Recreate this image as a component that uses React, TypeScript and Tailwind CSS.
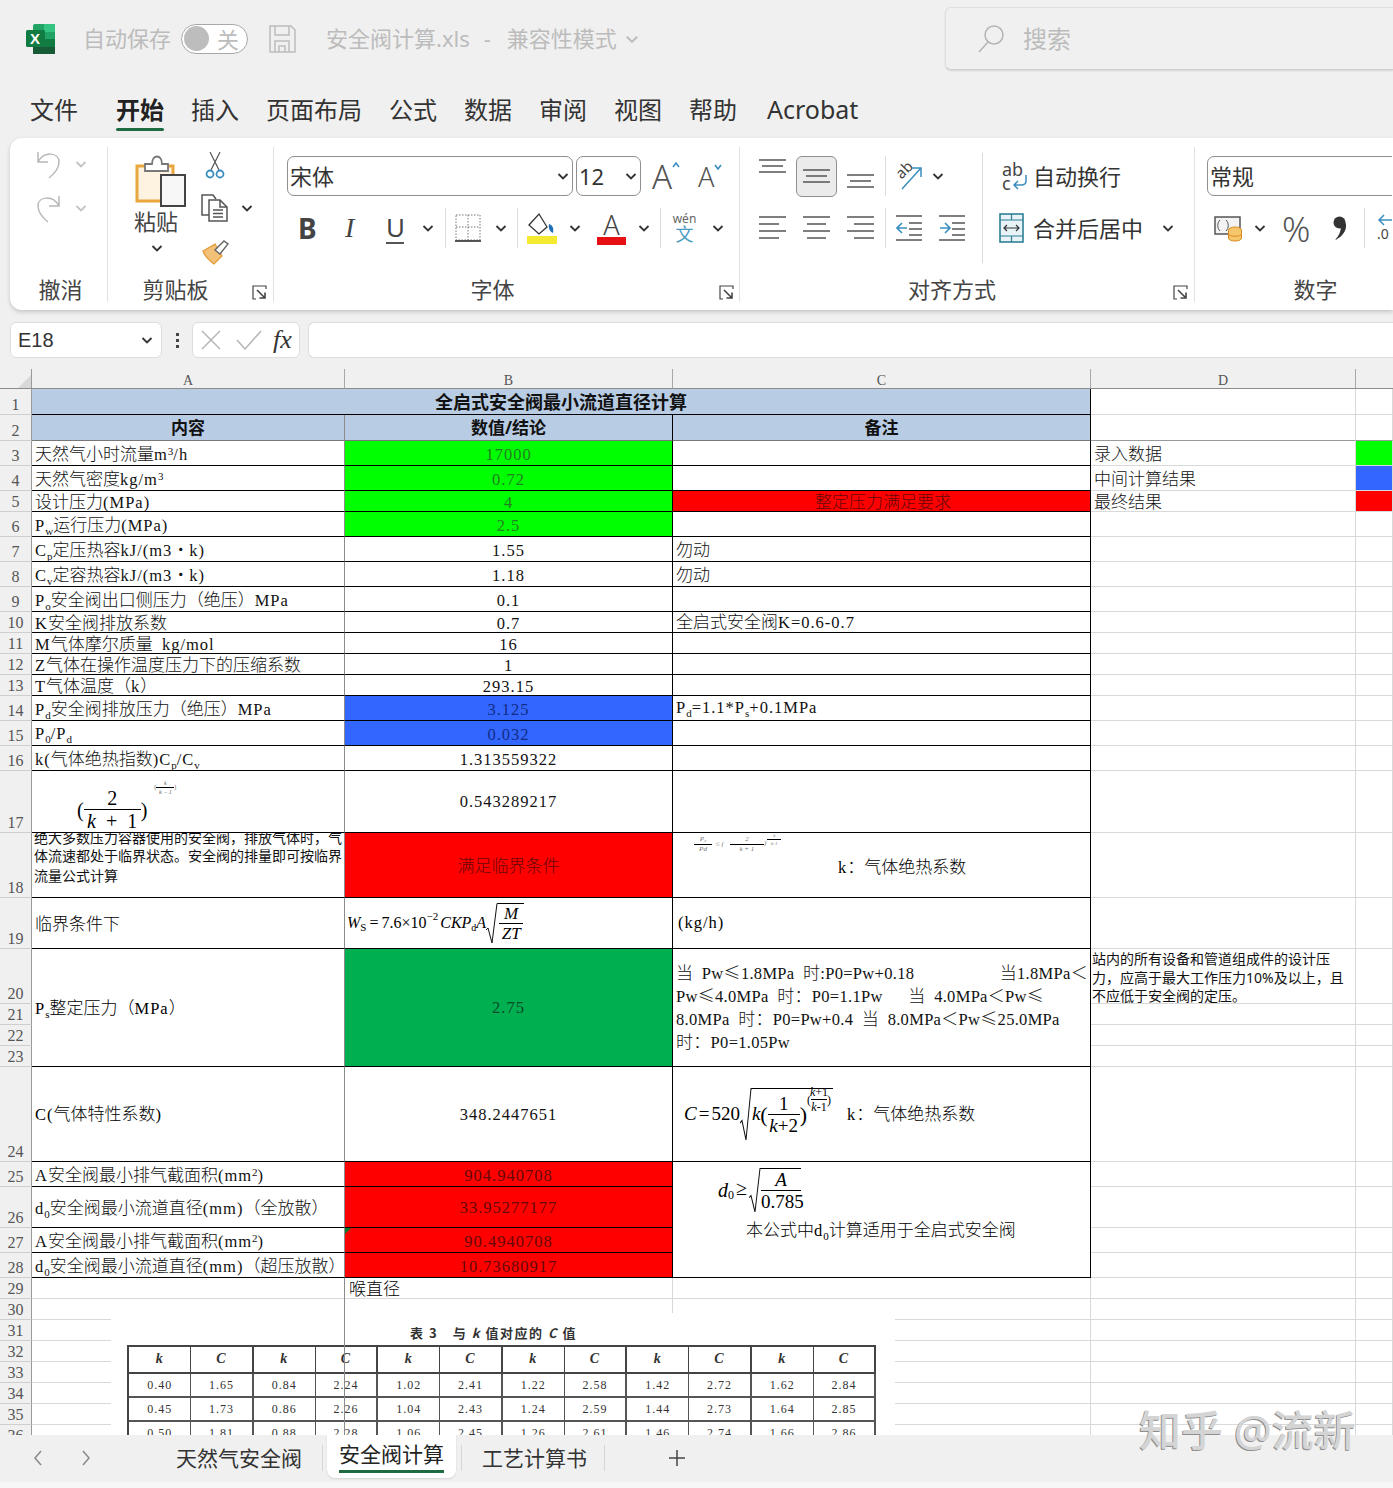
import React from 'react';

const line = 'border-b border-r border-black';
const light = 'border-b border-r border-[#d9d9d9]';
const labelCell = 'border-b border-r border-b-black border-r-[#8c8c8c]';
const serif = "font-['Liberation_Serif',serif]";

const fills: Record<string, string> = {
  green: 'bg-[#00ff00] text-[#228022]',
  blue: 'bg-[#3366ff] text-[#122c85]',
  red: 'bg-[#ff0000] text-[#660808]',
  dark: 'bg-[#00b050] text-[#0a4a28]',
  none: 'text-[#111]',
};

// ‹x› is a subscript, «x» a superscript, ascii runs get the narrow latin face
function Rich({ text }: { text: string }) {
  const parts = text.split(/(‹[^›]*›|«[^»]*»|[\x20-\x7e]+)/).filter(Boolean);
  return (
    <span className="whitespace-pre">
      {parts.map((p, i) => {
        if (p[0] === '‹') return <span key={i} className={`relative top-[4px] text-[11px] ${serif}`}>{p.slice(1, -1)}</span>;
        if (p[0] === '«') return <span key={i} className={`relative -top-[5px] text-[11px] ${serif}`}>{p.slice(1, -1)}</span>;
        if (p.charCodeAt(0) < 127) return <span key={i} className={`text-[16.5px] tracking-[1px] ${serif}`}>{p.replace(/ /g, '\u2002')}</span>;
        return <span key={i} className="font-['Noto_Sans_CJK_SC',sans-serif] text-[17px] font-light">{p}</span>;
      })}
    </span>
  );
}

function Frac({ top, bottom, className }: { top: React.ReactNode; bottom: React.ReactNode; className?: string }) {
  return (
    <span className={`inline-flex flex-col items-center ${className ?? ''}`}>
      <span className="leading-none">{top}</span>
      <span className="mt-[1px] self-stretch border-t border-black pt-[1px] text-center leading-none">{bottom}</span>
    </span>
  );
}

function Root({ children }: { children: React.ReactNode }) {
  return (
    <span className="inline-flex items-stretch">
      <svg className="w-[12px] shrink-0" viewBox="0 0 12 40" preserveAspectRatio="none" fill="none" stroke="#111" strokeWidth="1">
        <path d="M0 27L2 25L6 40L11 0.5H12" />
      </svg>
      <span className="flex items-center border-t border-black">{children}</span>
    </span>
  );
}

function Chev({ className = '', color = '#333' }: { className?: string; color?: string }) {
  return (
    <svg className={`h-[14px] w-[14px] shrink-0 ${className}`} viewBox="0 0 14 14" fill="none" stroke={color} strokeWidth="1.8">
      <path d="M2.5 5L7 9.5L11.5 5" />
    </svg>
  );
}

function Launcher({ className }: { className: string }) {
  return (
    <svg className={`absolute h-[15px] w-[15px] ${className}`} viewBox="0 0 15 15" fill="none" stroke="#444" strokeWidth="1.2">
      <path d="M14 4V1H1V14H4" />
      <path d="M5 5L13 13M13 7.5V13H7.5" strokeWidth="1.6" />
    </svg>
  );
}

function Lines({ rows, className = '' }: { rows: [number, number, number][]; className?: string }) {
  return (
    <svg className={`h-[28px] w-[27px] shrink-0 ${className}`} viewBox="0 0 27 28" stroke="#555" strokeWidth="1.5">
      {rows.map(([x, w, y], i) => (
        <line key={i} x1={x} x2={x + w} y1={y} y2={y} />
      ))}
    </svg>
  );
}

function Sep({ className = '' }: { className?: string }) {
  return <div className={`h-[40px] w-px shrink-0 bg-[#dcdcdc] ${className}`} />;
}

function Select({ text, className }: { text: string; className: string }) {
  return (
    <div className={`flex h-[40px] items-center justify-between rounded-[7px] border border-[#8f8f8f] bg-white pl-[2px] pr-[2px] text-[22px] text-[#333] ${className}`}>
      <span>{text}</span>
      <Chev />
    </div>
  );
}

function Group({ className, labelClass = '', label, children }: { className: string; labelClass?: string; label: string; children: React.ReactNode }) {
  return (
    <div className={`relative flex h-full shrink-0 flex-col ${className}`}>
      <div className="flex-1">{children}</div>
      <div className={`flex h-[35px] items-center justify-center pb-[6px] text-[22px] text-[#444] ${labelClass}`}>{label}</div>
    </div>
  );
}

function Divider() {
  return <div className="h-[155px] w-px shrink-0 self-center bg-[#e2e2e2]" />;
}

function TitleBar() {
  return (
    <div className="flex h-[77px] items-center pl-[26px] text-[#bcbcbc]">
      <svg className="h-[30px] w-[30px] shrink-0" viewBox="0 0 30 30">
        <rect x="7" y="0" width="22" height="30" rx="2" fill="#21a366" />
        <rect x="18" y="0" width="11" height="8" fill="#33c481" />
        <rect x="18" y="15" width="11" height="8" fill="#107c41" />
        <rect x="7" y="23" width="22" height="7" fill="#185c37" />
        <rect x="0" y="6" width="19" height="17" rx="1.5" fill="#107c41" />
        <text x="4" y="20" fontSize="15" fontWeight="700" fill="#fff" fontFamily="Liberation Sans">X</text>
      </svg>
      <span className="ml-[27px] text-[22px]">自动保存</span>
      <div className="ml-[10px] flex h-[30px] w-[67px] items-center rounded-full border border-[#a8a8a8] bg-white pl-[2px]">
        <div className="h-[25px] w-[25px] rounded-full bg-[#bdbdbd]" />
        <span className="ml-[8px] text-[22px] leading-none">关</span>
      </div>
      <svg className="ml-[21px] h-[28px] w-[27px] shrink-0" viewBox="0 0 27 28" fill="none" stroke="#bcbcbc" strokeWidth="1.5">
        <path d="M1 1H22L26 5V27H1Z" />
        <path d="M6 1V10H20V1M6 27V16H20V27M10 27V21H16V27" />
      </svg>
      <span className="ml-[30px] text-[22px]">安全阀计算.xls</span>
      <span className="ml-[14px] text-[22px]">-</span>
      <span className="ml-[16px] text-[22px]">兼容性模式</span>
      <Chev className="ml-[7px] h-[16px] w-[16px]" color="#bcbcbc" />
      <div className="ml-auto flex h-[63px] w-[448px] shrink-0 items-center rounded-l-[6px] border-y border-l border-[#dedede] border-b-[#cfcfcf] pl-[32px] shadow-[0_1px_2px_rgba(0,0,0,0.12)]">
        <svg className="h-[28px] w-[27px]" viewBox="0 0 27 28" fill="none" stroke="#b5b5b5" strokeWidth="1.5">
          <circle cx="16" cy="10" r="9" />
          <path d="M10 17L1 27" />
        </svg>
        <span className="ml-[18px] text-[24px]">搜索</span>
      </div>
    </div>
  );
}

function MenuBar() {
  return (
    <div className="flex h-[61px] items-center gap-[27px] pl-[30px] pt-[5px] text-[24px] text-[#333]">
      <span className="mr-[11px]">文件</span>
      <span className="relative font-bold text-[#222]">
        开始
        <div className="absolute -bottom-[3px] left-0 h-[3px] w-full rounded-full bg-[#1e6b42]" />
      </span>
      <span>插入</span>
      <span>页面布局</span>
      <span>公式</span>
      <span>数据</span>
      <span>审阅</span>
      <span>视图</span>
      <span>帮助</span>
      <span className="ml-[3px] text-[25px]">Acrobat</span>
    </div>
  );
}

function UndoGroup() {
  return (
    <Group className="w-[97px]" labelClass="pl-[4px]" label="撤消">
      <div className="flex flex-col gap-[14px] pl-[26px] pt-[11px]">
        <div className="flex items-center">
          <svg className="h-[30px] w-[26px]" viewBox="0 0 26 30" fill="none" stroke="#b8b8b8" strokeWidth="1.5">
            <path d="M2 3V13H12M2 13C8 2 23 3 23 13C23 19 18 25 13 29" />
          </svg>
          <Chev className="ml-[12px]" color="#c4c4c4" />
        </div>
        <div className="flex items-center">
          <svg className="h-[30px] w-[26px]" viewBox="0 0 26 30" fill="none" stroke="#b8b8b8" strokeWidth="1.5">
            <path d="M23 3V13H13M23 13C17 2 2 3 2 13C2 19 7 25 12 29" />
          </svg>
          <Chev className="ml-[12px]" color="#c4c4c4" />
        </div>
      </div>
    </Group>
  );
}

function ClipboardGroup() {
  return (
    <Group className="w-[165px]" labelClass="pr-[30px]" label="剪贴板">
      <div className="flex pl-[26px] pt-[13px]">
        <div className="flex w-[52px] flex-col items-center">
          <svg className="h-[56px] w-[51px]" viewBox="0 0 51 56">
            <rect x="2" y="14" width="37" height="36" fill="#fdf3e0" />
            <path d="M10 15H2V50H26M31 15H38V24" fill="none" stroke="#eaa63f" strokeWidth="3" />
            <path d="M10 20V13H17C17 3 27 3 27 13H33V20Z" fill="#fff" stroke="#777" strokeWidth="1.8" />
            <rect x="26" y="24" width="24" height="31" fill="#f7f7f7" stroke="#444" strokeWidth="2" />
          </svg>
          <span className="-ml-[8px] -mt-[1px] text-[22px] leading-[30px] text-[#444]">粘贴</span>
          <Chev className="-ml-[6px] mt-[5px]" />
        </div>
        <div className="ml-[14px] flex flex-col items-start">
          <svg className="ml-[5px] h-[28px] w-[20px]" viewBox="0 0 20 28" fill="none">
            <path d="M6 19L15 1M14 19L5 1" stroke="#555" strokeWidth="1.2" />
            <circle cx="5" cy="23" r="3.5" stroke="#3a8fc0" strokeWidth="1.8" />
            <circle cx="15" cy="23" r="3.5" stroke="#3a8fc0" strokeWidth="1.8" />
          </svg>
          <div className="mt-[15px] flex items-center">
            <svg className="h-[28px] w-[28px]" viewBox="0 0 28 28" fill="none" stroke="#555" strokeWidth="1.5">
              <path d="M9 21H2V1H13L16 5" />
              <path d="M9 6H20L27 13V27H9Z" fill="#fff" />
              <path d="M20 6V13H27M13 16H23M13 19.5H23M13 23H23" />
            </svg>
            <Chev className="ml-[12px]" />
          </div>
          <svg className="ml-[2px] mt-[17px] h-[26px] w-[27px]" viewBox="0 0 27 26">
            <path d="M1 12L13 5L20 17L12 25C8 22 3 18 1 12Z" fill="#f3c078" stroke="#e39a35" strokeWidth="1.2" />
            <path d="M13 11L22 2L26 5L18 15Z" fill="#fff" stroke="#666" strokeWidth="1.4" />
          </svg>
        </div>
      </div>
      <Launcher className="left-[144px] top-[147px]" />
    </Group>
  );
}

function FontGroup() {
  return (
    <Group className="w-[465px]" labelClass="pr-[28px]" label="字体">
      <div className="flex flex-col gap-[12px] pl-[13px] pt-[18px]">
        <div className="flex items-center text-[#555]">
          <Select text="宋体" className="w-[286px]" />
          <Select text="12" className="ml-[3px] w-[65px]" />
          <div className="relative ml-[11px] w-[28px] text-[33px] font-light leading-none">
            A
            <svg className="absolute left-[20px] top-[2px] h-[6px] w-[8px]" viewBox="0 0 8 6" fill="none" stroke="#3a8fc0" strokeWidth="1.6">
              <path d="M1 5L4 1L7 5" />
            </svg>
          </div>
          <div className="relative ml-[18px] w-[24px] text-[27px] font-light leading-none">
            A
            <svg className="absolute left-[16px] top-[1px] h-[6px] w-[8px]" viewBox="0 0 8 6" fill="none" stroke="#3a8fc0" strokeWidth="1.6">
              <path d="M1 1L4 5L7 1" />
            </svg>
          </div>
        </div>
        <div className="flex h-[40px] items-center pl-[11px] text-[#444]">
          <span className="w-[18px] text-[28px] font-bold">B</span>
          <span className={`ml-[29px] w-[13px] text-[28px] italic ${serif}`}>I</span>
          <span className="ml-[28px] w-[18px] border-b-2 border-[#555] text-[26px] leading-[30px]">U</span>
          <Chev className="ml-[17px]" />
          <Sep className="ml-[10px]" />
          <svg className="ml-[9px] h-[28px] w-[26px] shrink-0" viewBox="0 0 26 28" fill="none" stroke="#777" strokeWidth="1" strokeDasharray="1.5 1.5">
            <path d="M1 1H25V26H1ZM1 13H25M13 1V26" />
            <path d="M0 27H26" stroke="#222" strokeWidth="1.5" strokeDasharray="none" />
          </svg>
          <Chev className="ml-[13px]" />
          <Sep className="ml-[9px]" />
          <svg className="ml-[9px] h-[32px] w-[30px] shrink-0" viewBox="0 0 30 32">
            <path d="M2 13L12 2L20 15L12 22Z" fill="#fff" stroke="#333" strokeWidth="1.3" />
            <path d="M22 12C25 13 27 15 26 21C23 20 21 16 22 12Z" fill="#1f6fb5" />
            <rect x="0" y="24" width="30" height="8" fill="#f5ea2f" />
          </svg>
          <Chev className="ml-[11px]" />
          <div className="ml-[15px] flex w-[29px] shrink-0 flex-col items-center">
            <span className="text-[27px] font-light leading-[25px] text-[#444]">A</span>
            <div className="h-[8px] w-full bg-[#e60f14]" />
          </div>
          <Chev className="ml-[11px]" />
          <Sep className="ml-[9px]" />
          <div className="ml-[10px] flex w-[27px] shrink-0 flex-col items-center">
            <span className="text-[12px] leading-[12px] text-[#666]">wén</span>
            <span className="text-[18px] leading-[19px] text-[#4a9cc0]">文</span>
          </div>
          <Chev className="ml-[13px]" />
        </div>
      </div>
      <Launcher className="left-[445px] top-[147px]" />
    </Group>
  );
}

const stackTop: [number, number, number][] = [[0, 27, 3], [3, 21, 9], [0, 27, 15]];
const stackMid: [number, number, number][] = [[0, 27, 8], [3, 21, 14], [0, 27, 20]];
const stackBottom: [number, number, number][] = [[0, 27, 13], [3, 21, 19], [0, 27, 25]];
const alignLeft: [number, number, number][] = [[0, 27, 3], [0, 20, 10], [0, 27, 17], [0, 20, 24]];
const alignCenter: [number, number, number][] = [[0, 27, 3], [4, 19, 10], [0, 27, 17], [4, 19, 24]];
const alignRight: [number, number, number][] = [[0, 27, 3], [7, 20, 10], [0, 27, 17], [7, 20, 24]];

function AlignGroup() {
  return (
    <Group className="w-[454px]" labelClass="pr-[30px]" label="对齐方式">
      <div className="absolute left-[242px] top-[15px] h-[110px] w-px bg-[#dcdcdc]" />
      <div className="flex flex-col gap-[12px] pl-[19px] pt-[18px]">
        <div className="flex h-[40px] items-center">
          <Lines rows={stackTop} className="-mt-[10px]" />
          <div className="ml-[10px] flex h-[41px] w-[41px] shrink-0 items-center justify-center rounded-[6px] border border-[#8f8f8f] bg-[#ebebeb]">
            <Lines rows={stackMid} />
          </div>
          <Lines rows={stackBottom} className="ml-[10px]" />
          <Sep className="ml-[11px]" />
          <div className="relative ml-[10px] h-[30px] w-[26px] shrink-0">
            <span className="absolute left-[-1px] top-[1px] origin-center -rotate-45 text-[15px] leading-none text-[#444]">ab</span>
            <svg className="absolute inset-0" viewBox="0 0 26 30" fill="none" stroke="#3a8fc0" strokeWidth="1.5">
              <path d="M6 28L25 7M16 7H25V16" />
            </svg>
          </div>
          <Chev className="ml-[9px]" />
          <div className="ml-[57px] flex w-[25px] shrink-0 flex-col text-[18px] leading-[14px] text-[#444]">
            <span>ab</span>
            <span className="relative">
              c
              <svg className="absolute left-[10px] top-[-2px] h-[16px] w-[16px]" viewBox="0 0 16 16" fill="none" stroke="#3a8fc0" strokeWidth="1.5">
                <path d="M14 1V7C14 10 12 11 9 11H2M6 7L2 11L6 15" />
              </svg>
            </span>
          </div>
          <span className="ml-[6px] whitespace-nowrap text-[22px] text-[#333]">自动换行</span>
        </div>
        <div className="flex h-[40px] items-center">
          <Lines rows={alignLeft} />
          <Lines rows={alignCenter} className="ml-[17px]" />
          <Lines rows={alignRight} className="ml-[17px]" />
          <Sep className="ml-[11px]" />
          <svg className="ml-[10px] h-[28px] w-[26px] shrink-0" viewBox="0 0 26 28" fill="none">
            <path d="M0 2H26M13 9H26M13 15H26M13 21H26M0 26H26" stroke="#555" strokeWidth="1.4" />
            <path d="M11 14H1M6 9L1 14L6 19" stroke="#3a8fc0" strokeWidth="1.6" />
          </svg>
          <svg className="ml-[17px] h-[28px] w-[26px] shrink-0" viewBox="0 0 26 28" fill="none">
            <path d="M0 2H26M13 9H26M13 15H26M13 21H26M0 26H26" stroke="#555" strokeWidth="1.4" />
            <path d="M1 14H11M6 9L11 14L6 19" stroke="#3a8fc0" strokeWidth="1.6" />
          </svg>
          <svg className="ml-[34px] h-[30px] w-[25px] shrink-0" viewBox="0 0 25 30" fill="none">
            <rect x="1" y="1" width="23" height="28" fill="#e8f3f7" stroke="#2f7f96" strokeWidth="1.6" />
            <path d="M1 7H24M1 23H24M12.5 1V7M12.5 23V29" stroke="#2f7f96" strokeWidth="1.2" />
            <path d="M5 15H20M8 12L5 15L8 18M17 12L20 15L17 18" stroke="#333" strokeWidth="1.2" />
          </svg>
          <span className="ml-[9px] whitespace-nowrap text-[22px] text-[#333]">合并后居中</span>
          <Chev className="ml-[18px]" />
        </div>
      </div>
      <Launcher className="left-[433px] top-[147px]" />
    </Group>
  );
}

function NumberGroup() {
  return (
    <Group className="w-[197px] overflow-hidden" labelClass="pl-[44px]" label="数字">
      <div className="flex flex-col gap-[12px] pl-[12px] pt-[18px]">
        <Select text="常规" className="w-[300px] shrink-0" />
        <div className="flex h-[40px] items-center pl-[7px] text-[#555]">
          <svg className="h-[28px] w-[29px] shrink-0" viewBox="0 0 29 28" fill="none">
            <rect x="1" y="3" width="25" height="17" fill="#f3f3f3" stroke="#555" strokeWidth="1.5" />
            <path d="M6 6C3 9 3 14 6 17M12 6C15 9 15 14 12 17" stroke="#555" />
            <ellipse cx="21" cy="16" rx="6.5" ry="3" fill="#f6c66c" stroke="#d98c1f" />
            <path d="M14.5 16V24C14.5 28 27.5 28 27.5 24V16" fill="#f6c66c" stroke="#d98c1f" />
            <path d="M14.5 20C14.5 23 27.5 23 27.5 20" stroke="#d98c1f" />
          </svg>
          <Chev className="ml-[10px]" />
          <span className="ml-[15px] w-[27px] shrink-0 text-[35px] font-light leading-none">%</span>
          <svg className="ml-[24px] h-[24px] w-[13px] shrink-0" viewBox="0 0 13 24">
            <circle cx="6.5" cy="6.5" r="6" fill="#333" />
            <path d="M8 10L13 7C14 15 9 21 2 24C6 20 8 15 8 10Z" fill="#333" />
          </svg>
          <Sep className="ml-[18px]" />
          <div className="ml-[12px] flex shrink-0 flex-col">
            <svg className="h-[12px] w-[16px]" viewBox="0 0 16 12" fill="none" stroke="#3a8fc0" strokeWidth="1.5">
              <path d="M16 6H2M7 1L2 6L7 11" />
            </svg>
            <span className="text-[14px] leading-[16px] text-[#444]">.0</span>
          </div>
        </div>
      </div>
    </Group>
  );
}

function FormulaBar() {
  return (
    <div className="mb-[11px] mt-[12px] flex h-[36px] pl-[10px]">
      <div className="flex w-[152px] shrink-0 items-center justify-between rounded-[6px] border border-[#dedede] bg-white pl-[7px] pr-[7px] font-['Liberation_Sans',sans-serif] text-[20px] text-[#333]">
        <span>E18</span>
        <Chev />
      </div>
      <div className="flex w-[30px] shrink-0 flex-col items-center justify-center gap-[3px]">
        <div className="h-[3px] w-[3px] bg-[#444]" />
        <div className="h-[3px] w-[3px] bg-[#444]" />
        <div className="h-[3px] w-[3px] bg-[#444]" />
      </div>
      <div className="flex w-[108px] shrink-0 items-center rounded-[6px] border border-[#dedede] bg-white pl-[8px]">
        <svg className="h-[20px] w-[20px] shrink-0" viewBox="0 0 20 20" fill="none" stroke="#b5b5b5" strokeWidth="1.5">
          <path d="M1 1L19 19M19 1L1 19" />
        </svg>
        <svg className="ml-[15px] h-[20px] w-[26px] shrink-0" viewBox="0 0 26 20" fill="none" stroke="#b5b5b5" strokeWidth="1.5">
          <path d="M1 10L9 19L25 1" />
        </svg>
        <span className={`ml-[11px] text-[26px] italic leading-none text-[#333] ${serif}`}>fx</span>
      </div>
      <div className="ml-[8px] flex-1 rounded-l-[6px] border-y border-l border-[#dedede] bg-white" />
    </div>
  );
}

type DataRow = { n: number; a: string; b: string; fill?: string; c?: string; cFill?: string; d?: string; e?: string };

const dataRows: DataRow[] = [
  { n: 3, a: '天然气小时流量m«3»/h', b: '17000', fill: 'green', d: '录入数据', e: 'bg-[#00ff00]' },
  { n: 4, a: '天然气密度kg/m«3»', b: '0.72', fill: 'green', d: '中间计算结果', e: 'bg-[#3366ff]' },
  { n: 5, a: '设计压力(MPa)', b: '4', fill: 'green', c: '整定压力满足要求', cFill: 'red', d: '最终结果', e: 'bg-[#ff0000]' },
  { n: 6, a: 'P‹w›运行压力(MPa)', b: '2.5', fill: 'green' },
  { n: 7, a: 'C‹p›定压热容kJ/(m3·k)', b: '1.55', c: '勿动' },
  { n: 8, a: 'C‹v›定容热容kJ/(m3·k)', b: '1.18', c: '勿动' },
  { n: 9, a: 'P‹o›安全阀出口侧压力（绝压）MPa', b: '0.1' },
  { n: 10, a: 'K安全阀排放系数', b: '0.7', c: '全启式安全阀K=0.6-0.7' },
  { n: 11, a: 'M气体摩尔质量 kg/mol', b: '16' },
  { n: 12, a: 'Z气体在操作温度压力下的压缩系数', b: '1' },
  { n: 13, a: 'T气体温度（k）', b: '293.15' },
  { n: 14, a: 'P‹d›安全阀排放压力（绝压）MPa', b: '3.125', fill: 'blue', c: 'P‹d›=1.1*P‹s›+0.1MPa' },
  { n: 15, a: 'P‹0›/P‹d›', b: '0.032', fill: 'blue' },
  { n: 16, a: 'k(气体绝热指数)C‹p›/C‹v›', b: '1.313559322' },
];

function RowNo({ n }: { n: number }) {
  return (
    <div className={`flex items-end justify-center border-b border-r border-b-[#cfcfcf] border-r-[#9a9a9a] bg-[#f0f0f0] text-[16px] leading-[19px] text-[#555] ${serif}`}>
      {n}
    </div>
  );
}

function ColHead({ t, last }: { t: string; last?: boolean }) {
  return (
    <div className={`flex items-end justify-center border-b border-b-[#8c8c8c] bg-[#f0f0f0] text-[14px] leading-[14px] text-[#555] ${serif} ${last ? '' : 'border-r border-r-[#a8a8a8]'}`}>
      {t}
    </div>
  );
}

function Label({ text }: { text: string }) {
  return (
    <div className={`flex items-center overflow-hidden pl-[3px] pt-[2px] leading-[18px] text-[#111] ${labelCell}`}>
      <Rich text={text} />
    </div>
  );
}

function Value({ text, fill = 'none', className = '' }: { text: string; fill?: string; className?: string }) {
  return (
    <div className={`flex items-center justify-center leading-[18px] ${line} ${fills[fill]} ${className}`}>
      <Rich text={text} />
    </div>
  );
}

function Blank({ className = light }: { className?: string }) {
  return <div className={className} />;
}

function Sheet() {
  return (
    <div className="grid h-[1066px] grid-cols-[32px_313px_328px_418px_265px_37px] grid-rows-[20px_26px_26px_25px_25px_21px_25px_25px_25px_25px_21px_21px_21px_21px_25px_25px_25px_62px_65px_51px_55px_21px_21px_21px_95px_25px_41px_25px_25px_21px_21px_21px_21px_21px_21px_21px_21px] overflow-hidden bg-white">
      <div className="flex border-b border-r border-b-[#8c8c8c] border-r-[#9a9a9a] bg-[#f0f0f0]">
        <div className="ml-auto mt-auto h-0 w-0 border-b-[13px] border-l-[13px] border-b-[#d8d8d8] border-l-transparent" />
      </div>
      <ColHead t="A" />
      <ColHead t="B" />
      <ColHead t="C" />
      <ColHead t="D" />
      <ColHead t="" last />

      <RowNo n={1} />
      <div className={`col-span-3 flex items-center justify-center bg-[#b8cce4] text-[18px] font-bold leading-[22px] text-[#111] ${line}`}>全启式安全阀最小流道直径计算</div>
      <Blank />
      <Blank />

      <RowNo n={2} />
      <div className="flex items-center justify-center border-b border-r border-b-[#777] border-r-[#8c8c8c] bg-[#b8cce4] text-[17px] font-bold leading-[22px] text-[#111]">内容</div>
      <div className="flex items-center justify-center border-b border-r border-b-[#777] border-r-black bg-[#b8cce4] text-[17px] font-bold leading-[22px] text-[#111]">数值/结论</div>
      <div className="flex items-center justify-center border-b border-r border-b-[#777] border-r-black bg-[#b8cce4] text-[17px] font-bold leading-[22px] text-[#111]">备注</div>
      <Blank className="border-b border-r border-b-[#999] border-r-[#d9d9d9]" />
      <Blank className="border-b border-r border-b-[#999] border-r-[#d9d9d9]" />

      {dataRows.map((r) => (
        <React.Fragment key={r.n}>
          <RowNo n={r.n} />
          <Label text={r.a} />
          <Value text={r.b} fill={r.fill} className="pt-[2px]" />
          <div className={`flex items-center overflow-hidden pl-[3px] leading-[18px] ${r.cFill ? 'justify-center' : ''} ${line} ${fills[r.cFill ?? 'none']}`}>
            {r.c ? <Rich text={r.c} /> : null}
          </div>
          <div className={`flex items-center pl-[3px] leading-[18px] text-[#111] ${light}`}>{r.d ? <Rich text={r.d} /> : null}</div>
          <Blank className={`${light} ${r.e ?? ''}`} />
        </React.Fragment>
      ))}

      {/* 17 */}
      <RowNo n={17} />
      <div className={`flex items-center pl-[45px] pt-[16px] ${labelCell} ${serif}`}>
        <span className="text-[20px]">(</span>
        <Frac className="w-[57px] text-[20px] italic" top={<span className="not-italic">2</span>} bottom={<span>k&nbsp;&nbsp;<span className="not-italic">+&nbsp;&nbsp;1</span></span>} />
        <span className="text-[20px]">)</span>
        <span className="relative -top-[22px] ml-[7px] flex items-center text-[6px] text-[#666]">
          (<Frac className="w-[18px] italic" top="k" bottom="k − 1" />)
        </span>
      </div>
      <Value text="0.543289217" />
      <Blank className={line} />
      <Blank />
      <Blank />

      {/* 18 */}
      <RowNo n={18} />
      <div className={`flex flex-col overflow-hidden pl-[2px] text-[14px] leading-[18px] text-[#111] ${labelCell}`}>
        <div className="-mt-[4px] whitespace-nowrap">绝大多数压力容器使用的安全阀，排放气体时，气</div>
        <div className="whitespace-nowrap">体流速都处于临界状态。安全阀的排量即可按临界</div>
        <div className="mt-[2px] whitespace-nowrap">流量公式计算</div>
      </div>
      <Value text="满足临界条件" fill="red" />
      <div className={`flex flex-col ${line}`}>
        <div className={`ml-[21px] mt-[1px] flex h-[20px] items-center text-[7px] italic text-[#777] ${serif}`}>
          <Frac className="w-[18px]" top="P₀" bottom="Pd" />
          <span className="ml-[4px] mr-[6px]">≤ (</span>
          <Frac className="w-[34px]" top="2" bottom="k + 1" />
          <span className="relative -top-[1px]">)</span>
          <Frac className="relative -top-[5px] ml-[1px] w-[14px] text-[5px]" top="k" bottom="k-1" />
        </div>
        <div className="ml-[165px] leading-[24px]">
          <Rich text="k：气体绝热系数" />
        </div>
      </div>
      <Blank />
      <Blank />

      {/* 19 */}
      <RowNo n={19} />
      <div className={`flex items-center pl-[3px] ${labelCell}`}>
        <Rich text="临界条件下" />
      </div>
      <div className={`flex items-center whitespace-nowrap pl-[2px] text-[16px] ${line} ${serif}`}>
        <i>W</i>
        <span className="relative top-[4px] text-[11px]">S</span>
        <span className="mx-[3px]">=</span>
        <span>7.6×10</span>
        <span className="relative -top-[7px] text-[11px]">−2</span>
        <i className="ml-[2px]">CKP</i>
        <span className="relative top-[4px] text-[10px]">d</span>
        <i>A</i>
        <Root>
          <Frac className="w-[26px] px-[1px] py-[1px] text-[17px] italic" top="M" bottom="ZT" />
        </Root>
      </div>
      <div className={`flex items-center pl-[5px] ${line}`}>
        <Rich text="(kg/h)" />
      </div>
      <Blank />
      <Blank />

      {/* 20-23, merged in A, B and C */}
      <RowNo n={20} />
      <div className={`row-span-4 flex items-center pl-[3px] ${labelCell}`}>
        <Rich text="P‹s›整定压力（MPa）" />
      </div>
      <Value text="2.75" fill="dark" className="row-span-4" />
      <div className={`row-span-4 flex flex-col justify-center pb-[1px] pl-[3px] leading-[21px] text-[#111] [&_span]:tracking-[0.3px] ${line}`}>
        <Rich text="当 Pw≤1.8MPa 时:P0=Pw+0.18          当1.8MPa＜" />
        <Rich text="Pw≤4.0MPa 时：P0=1.1Pw   当 4.0MPa＜Pw≤" />
        <Rich text="8.0MPa 时：P0=Pw+0.4 当 8.0MPa＜Pw≤25.0MPa" />
        <Rich text="时：P0=1.05Pw" />
      </div>
      <div className={`overflow-visible whitespace-nowrap pl-[1px] pt-[1px] text-[14px] leading-[18.5px] text-[#111] ${light}`}>
        <div>站内的所有设备和管道组成件的设计压</div>
        <div>力，应高于最大工作压力10%及以上，且</div>
        <div>不应低于安全阀的定压。</div>
      </div>
      <Blank />
      <RowNo n={21} />
      <Blank />
      <Blank />
      <RowNo n={22} />
      <Blank />
      <Blank />
      <RowNo n={23} />
      <Blank />
      <Blank />

      {/* 24 */}
      <RowNo n={24} />
      <div className={`flex items-center pl-[3px] ${labelCell}`}>
        <Rich text="C(气体特性系数)" />
      </div>
      <Value text="348.2447651" />
      <div className={`flex items-center pl-[11px] ${line}`}>
        <div className={`flex items-center whitespace-nowrap text-[19px] ${serif}`}>
          <i>C</i>
          <span className="mx-[2px]">=</span>
          <span>520</span>
          <Root>
            <span className="flex items-center py-[5px] pr-[2px]">
              <i>k</i>
              <span className="text-[22px] leading-none">(</span>
              <Frac className="w-[32px]" top="1" bottom={<span><i>k</i>+2</span>} />
              <span className="text-[22px] leading-none">)</span>
              <span className="relative -top-[15px] flex items-center text-[12px]">
                (<Frac className="w-[16px]" top={<span><i>k</i>+1</span>} bottom={<span><i>k</i>-1</span>} />)
              </span>
            </span>
          </Root>
        </div>
        <div className="ml-[14px]">
          <Rich text="k：气体绝热系数" />
        </div>
      </div>
      <Blank />
      <Blank />

      {/* 25 */}
      <RowNo n={25} />
      <Label text="A安全阀最小排气截面积(mm«2»)" />
      <Value text="904.940708" fill="red" className="pt-[2px]" />
      <div className={`row-span-4 flex flex-col ${line}`}>
        <div className={`ml-[45px] mt-[5px] flex h-[46px] items-center whitespace-nowrap text-[20px] ${serif}`}>
          <i>d</i>
          <span className="relative top-[5px] text-[12px]">0</span>
          <span className="relative -top-[2px] mx-[2px]">≥</span>
          <Root>
            <Frac className="w-[40px] py-[1px] text-[19px]" top={<i>A</i>} bottom="0.785" />
          </Root>
        </div>
        <div className="ml-[73px] mt-[3px]">
          <Rich text="本公式中d‹0›计算适用于全启式安全阀" />
        </div>
      </div>
      <Blank />
      <Blank />

      <RowNo n={26} />
      <Label text="d‹0›安全阀最小流道直径(mm)（全放散）" />
      <Value text="33.95277177" fill="red" />
      <Blank />
      <Blank />

      <RowNo n={27} />
      <Label text="A安全阀最小排气截面积(mm«2»)" />
      <Value text="90.4940708" fill="red" className="relative pt-[2px]" />
      <Blank />
      <Blank />

      <RowNo n={28} />
      <Label text="d‹0›安全阀最小流道直径(mm)（超压放散）" />
      <Value text="10.73680917" fill="red" className="pt-[2px]" />
      <Blank />
      <Blank />

      <RowNo n={29} />
      <Blank className="border-b border-r border-b-[#d9d9d9] border-r-[#8c8c8c]" />
      <div className={`flex items-center pl-[4px] leading-[18px] ${light}`}>
        <Rich text="喉直径" />
      </div>
      <Blank />
      <Blank />
      <Blank />

      {[30, 31, 32, 33, 34, 35, 36].map((n) => (
        <React.Fragment key={n}>
          <RowNo n={n} />
          <Blank className="border-b border-r border-b-[#d9d9d9] border-r-[#8c8c8c]" />
          <Blank />
          <Blank />
          <Blank />
          <Blank />
        </React.Fragment>
      ))}
    </div>
  );
}

const pasted = [
  ['0.40', '1.65', '0.84', '2.24', '1.02', '2.41', '1.22', '2.58', '1.42', '2.72', '1.62', '2.84'],
  ['0.45', '1.73', '0.86', '2.26', '1.04', '2.43', '1.24', '2.59', '1.44', '2.73', '1.64', '2.85'],
  ['0.50', '1.81', '0.88', '2.28', '1.06', '2.45', '1.26', '2.61', '1.46', '2.74', '1.66', '2.86'],
];

// the pasted picture of table 3, it floats over rows 30-36
function PastedTable() {
  return (
    <div className={`absolute left-[111px] top-[944px] h-[122px] w-[784px] overflow-hidden bg-white pl-[16px] pt-[12px] ${serif}`}>
      <div className="h-[20px] pr-[35px] text-center font-['Noto_Sans_CJK_SC',sans-serif] text-[13px] font-bold leading-[16px] tracking-[1.5px] text-[#333]">
        表 3　与 <i>k</i> 值对应的 <i>C</i> 值
      </div>
      <div className="grid w-[749px] grid-cols-12 border-l-2 border-t-2 border-[#444] text-center text-[12px] font-normal tracking-[1px] text-[#333]">
        {['k', 'C', 'k', 'C', 'k', 'C', 'k', 'C', 'k', 'C', 'k', 'C'].map((t, i) => (
          <div key={i} className={`h-[27px] border-b-2 border-[#444] text-[14px] font-bold italic leading-[24px] ${i % 2 ? 'border-r-2' : 'border-r'}`}>
            {t}
          </div>
        ))}
        {pasted.flat().map((t, i) => (
          <div key={i} className={`h-[24px] border-b-2 border-[#555] leading-[22px] ${i % 2 ? 'border-r-2' : 'border-r'}`}>
            {t}
          </div>
        ))}
      </div>
    </div>
  );
}

function SheetTabs() {
  return (
    <div className="flex h-[47px] items-start bg-[#f0f0f0] pl-[31px] text-[21px] text-[#333]">
      <svg className="mt-[14px] h-[18px] w-[14px] shrink-0" viewBox="0 0 14 18" fill="none" stroke="#888" strokeWidth="1.5">
        <path d="M10 2L4 9L10 16" />
      </svg>
      <svg className="ml-[34px] mt-[14px] h-[18px] w-[14px] shrink-0" viewBox="0 0 14 18" fill="none" stroke="#888" strokeWidth="1.5">
        <path d="M4 2L10 9L4 16" />
      </svg>
      <span className="ml-[83px] mt-[8px]">天然气安全阀</span>
      <div className="ml-[20px] mt-[10px] h-[26px] w-px bg-[#d6d6d6]" />
      <div className="ml-[4px] flex h-[43px] w-[129px] shrink-0 flex-col items-center rounded-b-[8px] bg-white shadow-[0_1px_2px_rgba(0,0,0,0.12)]">
        <span className="mt-[4px] leading-[30px] text-[#222]">安全阀计算</span>
        <div className="mt-[1px] h-[3px] w-[105px] bg-[#1e6b42]" />
      </div>
      <div className="ml-[5px] mt-[10px] h-[26px] w-px bg-[#d6d6d6]" />
      <span className="ml-[20px] mt-[8px]">工艺计算书</span>
      <div className="ml-[17px] mt-[10px] h-[26px] w-px bg-[#d6d6d6]" />
      <svg className="ml-[63px] mt-[14px] h-[18px] w-[18px] shrink-0" viewBox="0 0 18 18" stroke="#444" strokeWidth="1.5">
        <path d="M9 1V17M1 9H17" />
      </svg>
    </div>
  );
}

export default function App() {
  return (
    <div className="relative h-[1488px] w-[1393px] overflow-hidden bg-[#f0f0f0] font-['Noto_Sans','Noto_Sans_CJK_SC',sans-serif]">
      <TitleBar />
      <MenuBar />
      <div className="ml-[10px] flex h-[172px] rounded-l-[12px] bg-white shadow-[0_2px_4px_rgba(0,0,0,0.18)]">
        <UndoGroup />
        <Divider />
        <ClipboardGroup />
        <Divider />
        <FontGroup />
        <Divider />
        <AlignGroup />
        <Divider />
        <NumberGroup />
      </div>
      <FormulaBar />
      <div className="relative">
        <Sheet />
        <PastedTable />
        {/* B's left border stays on top of the picture */}
        <div className="absolute left-[344px] top-[909px] h-[157px] w-px bg-[#8c8c8c]" />
        <div className="absolute left-[345px] top-[859px] h-0 w-0 border-r-[6px] border-t-[6px] border-r-transparent border-t-[#0a7a30]" />
      </div>
      <SheetTabs />
      <div className="h-[6px] bg-[#f7f7f7]" />
      <div className="absolute left-[1139px] top-[1402px] whitespace-pre text-[42px] font-medium leading-[56px] text-[#d4d4d4] [text-shadow:-1px_1px_0_#8f8f8f]">
        知乎 @流新
      </div>
    </div>
  );
}
